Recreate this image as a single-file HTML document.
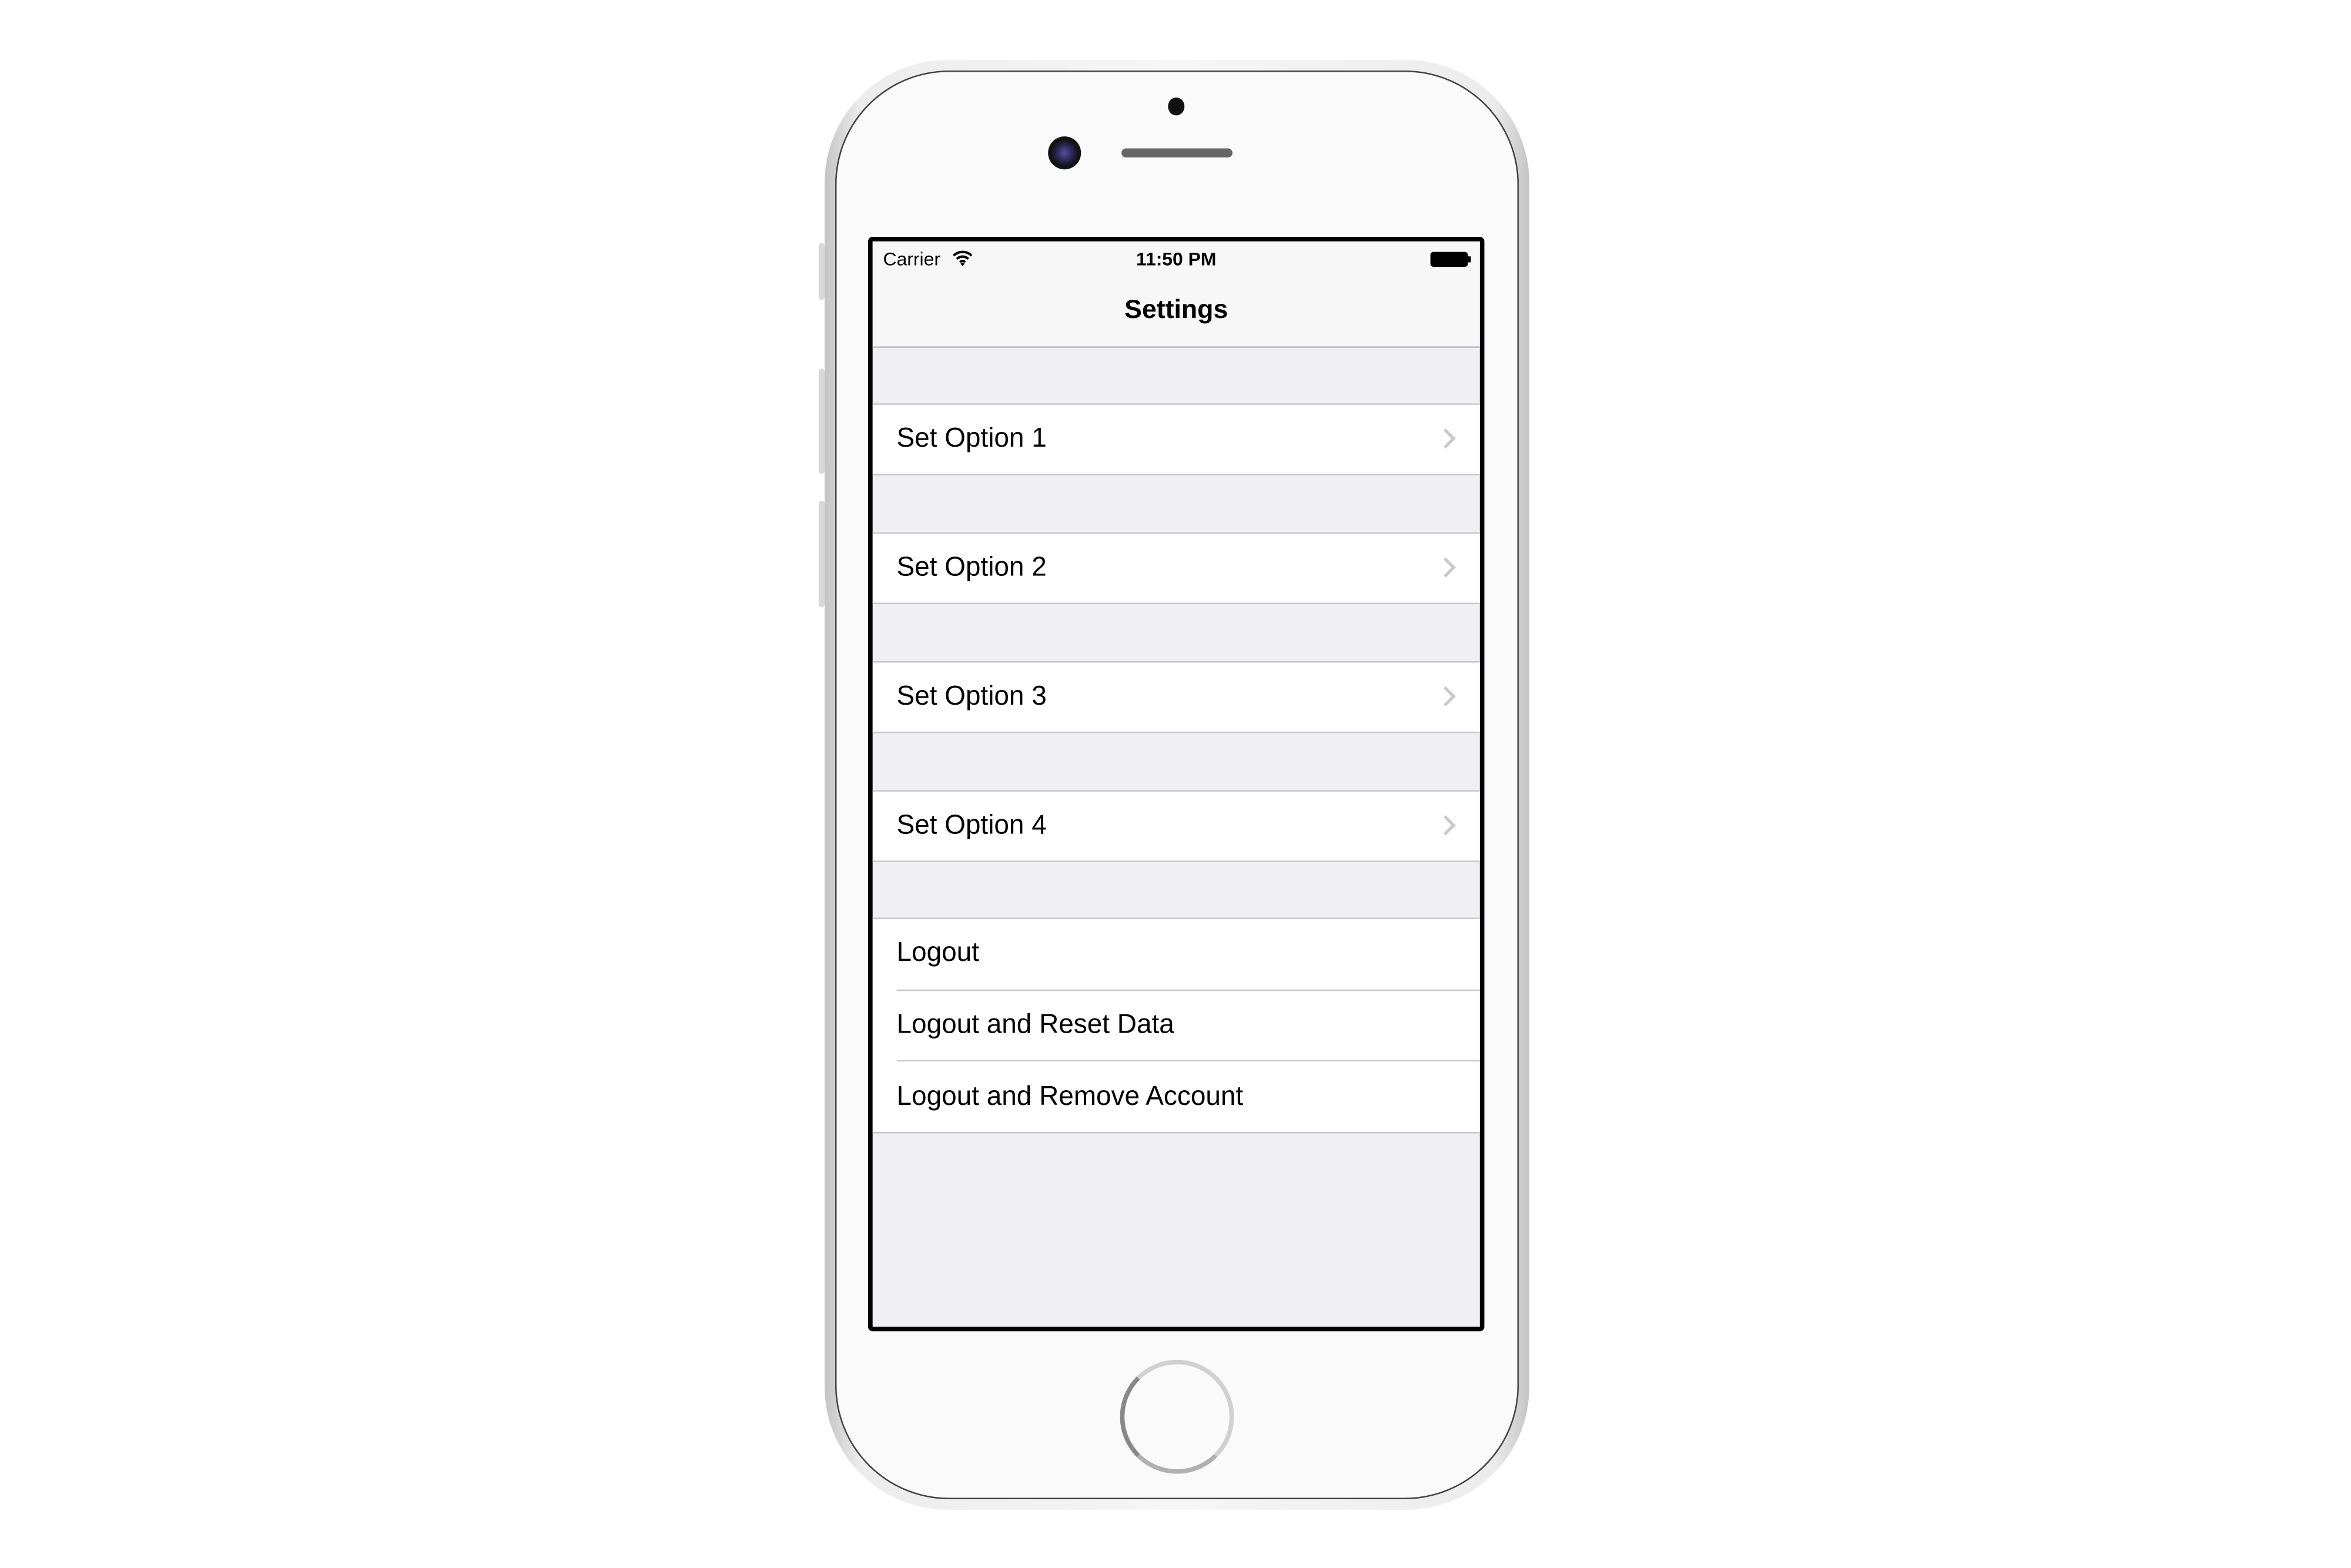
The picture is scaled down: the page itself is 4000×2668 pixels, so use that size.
<!DOCTYPE html>
<html><head><meta charset="utf-8"><style>
html,body{margin:0;padding:0;width:4000px;height:2668px;overflow:hidden;background:#fff}
#s{position:absolute;left:0;top:0;width:1568px;height:1046px;transform:scale(2.551);transform-origin:0 0;font-family:"Liberation Sans",sans-serif}
.a{position:absolute}
.phone{left:550px;top:40px;width:470px;height:967px;border-radius:82px;background:linear-gradient(90deg,#c4c4c4,#ececec 5%,#f6f6f6 50%,#ececec 95%,#c4c4c4);box-sizing:border-box}
.face{left:557px;top:47px;width:456px;height:953px;border-radius:76px;background:#fafafa;box-shadow:0 0 0 1px #444 inset}
.btn{background:#d8d8d8;width:4px;border-radius:2px}
.scr{left:579px;top:158px;width:411px;height:730px;background:#000;border-radius:3px}
.in{left:582px;top:161px;width:405px;height:724px;background:#efeff4;overflow:hidden}
.row{position:absolute;left:0;width:405px;background:#fff;border-top:1px solid #c8c7cc;border-bottom:1px solid #c8c7cc;box-sizing:border-box;height:48px;font-size:18px;color:#000}
.row span{position:absolute;left:16px;top:12px}
.chev{position:absolute;right:16px;top:15px}
.inset{position:absolute;left:16px;right:0;height:1px;background:#c8c7cc}
</style></head><body><div id="s">
<div class="a btn" style="left:546px;top:162px;height:38px"></div>
<div class="a btn" style="left:546px;top:246px;height:70px"></div>
<div class="a btn" style="left:546px;top:334px;height:71px"></div>
<div class="a btn" style="left:1016px;top:246px;height:70px"></div>
<div class="a phone"></div>
<div class="a face"></div>
<div class="a" style="left:779px;top:65px;width:11px;height:12px;border-radius:50%;background:#111"></div>
<div class="a" style="left:699px;top:91px;width:22px;height:22px;border-radius:50%;background:radial-gradient(circle,#5a4fa0 0,#2a2550 35%,#111 60%,#222 100%)"></div>
<div class="a" style="left:748px;top:99px;width:74px;height:6px;border-radius:3px;background:#666"></div>
<div class="a scr"></div>
<div class="a in">
 <div class="a" style="left:0;top:0;width:405px;height:70px;background:#f7f7f7;border-bottom:1px solid #bdbdc2"></div>
 <div class="a" style="left:7px;top:5px;font-size:12.5px">Carrier</div>
 <svg class="a" style="left:53px;top:5px" width="14" height="12" viewBox="0 0 14 12"><path d="M1 4.5a8.5 8.5 0 0 1 12 0M3.2 6.7a5.4 5.4 0 0 1 7.6 0M5.3 8.8a2.4 2.4 0 0 1 3.4 0" stroke="#000" stroke-width="1.6" fill="none"/><path d="M7 11.5 5.6 9.9a2 2 0 0 1 2.8 0z" fill="#000"/></svg>
 <div class="a" style="left:0;width:405px;top:5px;text-align:center;font-size:12.5px;font-weight:bold">11:50 PM</div>
 <div class="a" style="left:372px;top:7px;width:23px;height:8px;border:1px solid #000;border-radius:2px;background:#000;box-sizing:content-box"></div>
 <div class="a" style="left:397px;top:10px;width:2px;height:4px;background:#000"></div>
 <div class="a" style="left:0;width:405px;top:35px;text-align:center;font-size:17.5px;font-weight:bold">Settings</div>
 <div class="row" style="top:108px"><span>Set Option 1</span><svg class="chev" width="9" height="15" viewBox="0 0 9 15"><path d="M1.5 1.5 7.5 7.5 1.5 13.5" stroke="#c7c7cc" stroke-width="2" fill="none"/></svg></div>
 <div class="row" style="top:194px"><span>Set Option 2</span><svg class="chev" width="9" height="15" viewBox="0 0 9 15"><path d="M1.5 1.5 7.5 7.5 1.5 13.5" stroke="#c7c7cc" stroke-width="2" fill="none"/></svg></div>
 <div class="row" style="top:280px"><span>Set Option 3</span><svg class="chev" width="9" height="15" viewBox="0 0 9 15"><path d="M1.5 1.5 7.5 7.5 1.5 13.5" stroke="#c7c7cc" stroke-width="2" fill="none"/></svg></div>
 <div class="row" style="top:366px"><span>Set Option 4</span><svg class="chev" width="9" height="15" viewBox="0 0 9 15"><path d="M1.5 1.5 7.5 7.5 1.5 13.5" stroke="#c7c7cc" stroke-width="2" fill="none"/></svg></div>
 <div class="row" style="top:451px;height:144px">
  <span>Logout</span>
  <div class="inset" style="top:47px"></div>
  <span style="top:60px">Logout and Reset Data</span>
  <div class="inset" style="top:94px"></div>
  <span style="top:108px">Logout and Remove Account</span>
 </div>
</div>
<div class="a" style="left:747px;top:907px;width:70px;height:70px;border-radius:50%;border:3px solid #d0d0d0;border-left-color:#888;border-bottom-color:#b0b0b0;background:#fafafa"></div>
</div></body></html>
